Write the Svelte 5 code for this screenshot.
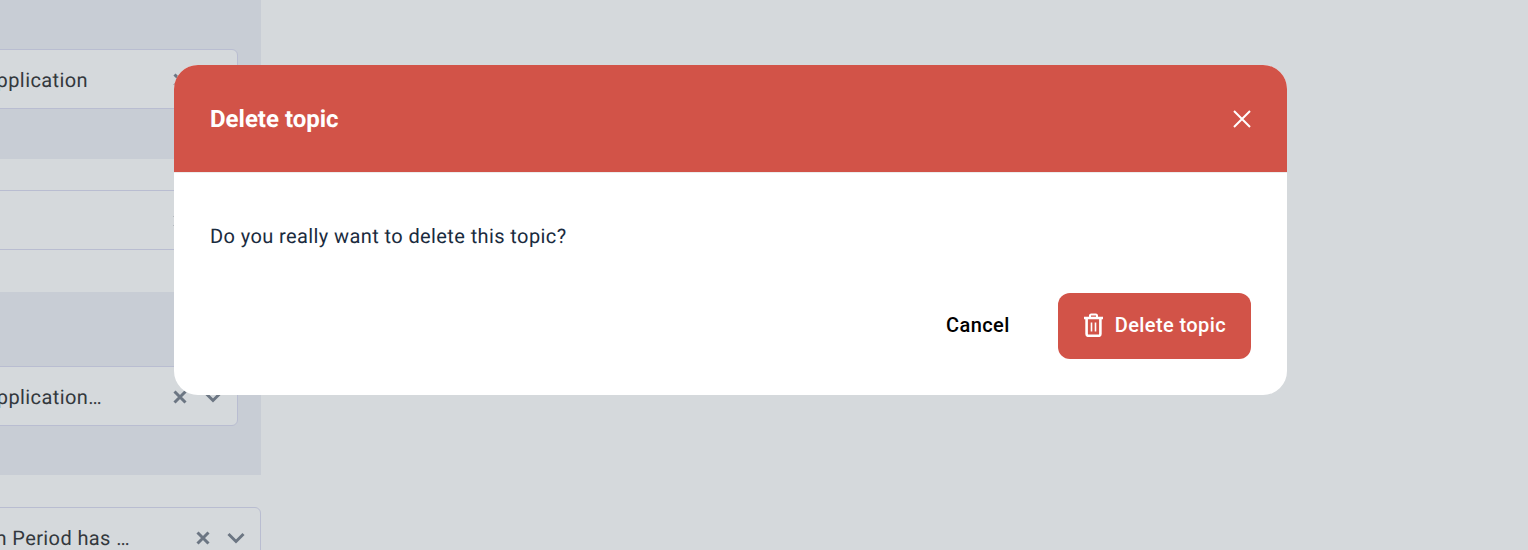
<script>
	// Background filter fields, clipped at the left edge of the window
	const sections = [
		{ shaded: true, kind: 'first', text: 'Application' },
		{ shaded: false, kind: 'second', text: '' },
		{ shaded: true, kind: 'third', text: 'Application…' },
		{ shaded: false, kind: 'fourth', text: 'Application Period has …' }
	];
</script>

<div class="page">
	<div class="column">
		{#each sections as section}
			<section class="section {section.kind}" class:shaded={section.shaded}>
				<div class="field">
					<span class="value">{section.text}</span>
					<svg class="clear" viewBox="0 0 14 14" width="14" height="14" aria-hidden="true">
						<path d="M1.5 1.5l11 11M12.5 1.5l-11 11" />
					</svg>
					<svg class="chevron" viewBox="0 0 18 12" width="18" height="12" aria-hidden="true">
						<path d="M1.5 2l7.5 7.5L16.5 2" />
					</svg>
				</div>
			</section>
		{/each}
	</div>

	<div class="modal" role="dialog" aria-labelledby="modal-title">
		<header class="modal-header">
			<h2 id="modal-title">Delete topic</h2>
			<button class="close" aria-label="Close">
				<svg viewBox="0 0 20 20" width="20" height="20" aria-hidden="true">
					<path d="M2 2l16 16M18 2L2 18" />
				</svg>
			</button>
		</header>
		<div class="modal-body">
			<p>Do you really want to delete this topic?</p>
			<div class="actions">
				<button class="cancel">Cancel</button>
				<button class="confirm">
					<svg viewBox="0 0 21 24" width="21" height="24" aria-hidden="true">
						<path d="M7 4V2.6a1.2 1.2 0 0 1 1.2-1.2h4.6A1.2 1.2 0 0 1 14 2.6V4" stroke-width="2" />
						<path d="M1 5h19" stroke-width="2.4" />
						<path d="M3.6 5v16a1.8 1.8 0 0 0 1.8 1.8h10.2a1.8 1.8 0 0 0 1.8-1.8V5" stroke-width="2.6" />
						<path d="M8.5 9.5v9M12.5 9.5v9" stroke-width="1.6" />
					</svg>
					Delete topic
				</button>
			</div>
		</div>
	</div>
</div>

<style>
	:global(body) {
		background: #d5d9dc;
		font-family: Roboto, 'Liberation Sans', sans-serif;
		text-rendering: geometricPrecision;
	}

	.page {
		height: 550px;
		overflow: hidden;
		background: #d5d9dc;
	}

	.column {
		width: 261px;
	}

	.section {
		box-sizing: border-box;
		padding-right: 23px;
	}

	.shaded {
		background: #c8cdd5;
	}

	.first {
		height: 159px;
		padding-top: 49px;
	}

	.second {
		height: 133px;
		padding-top: 31px;
	}

	.third {
		height: 183px;
		padding-top: 74px;
	}

	.fourth {
		height: 75px;
		padding-top: 32px;
		padding-right: 0;
	}

	.field {
		box-sizing: border-box;
		display: flex;
		align-items: center;
		height: 60px;
		margin-left: -120px;
		padding: 1px 15px 0 0;
		border: 1px solid #b9bdd1;
		border-radius: 6px;
		background: #d5d9dc;
	}

	.value {
		flex: 1;
		font-size: 20px;
		letter-spacing: 0.4px;
		color: #33383d;
		white-space: nowrap;
		text-align: right;
	}

	.first .value {
		padding-right: 85px;
	}

	.third .value {
		padding-right: 71px;
	}

	.fourth .value {
		padding-right: 66px;
	}

	.clear {
		margin-right: 17px;
		flex: none;
	}

	.clear path,
	.chevron path {
		fill: none;
		stroke: #6c7683;
		stroke-width: 3;
	}

	.chevron {
		flex: none;
	}

	.modal {
		position: absolute;
		left: 174px;
		top: 65px;
		width: 1113px;
		height: 330px;
		border-radius: 24px;
		background: #fff;
		overflow: hidden;
	}

	.modal-header {
		box-sizing: border-box;
		display: flex;
		align-items: center;
		justify-content: space-between;
		height: 108px;
		padding: 0 35px 0 36px;
		background: #d25348;
		border-bottom: 1px solid #eceded;
	}

	h2 {
		margin: 0;
		font-size: 24px;
		font-weight: 700;
		color: #fff;
	}

	.close {
		display: flex;
		padding: 0;
		border: 0;
		background: none;
	}

	.close path {
		fill: none;
		stroke: #fff;
		stroke-width: 2;
	}

	.modal-body {
		padding: 51px 36px 36px;
	}

	p {
		margin: 0;
		font-size: 20px;
		letter-spacing: 0.4px;
		line-height: 24px;
		color: #1a2b3e;
	}

	.actions {
		display: flex;
		justify-content: flex-end;
		align-items: center;
		gap: 48px;
		margin-top: 45px;
	}

	button {
		font-family: inherit;
	}

	.cancel {
		padding: 0 0 2px;
		border: 0;
		background: none;
		font-size: 20px;
		font-weight: 500;
		letter-spacing: 0.4px;
		color: #000;
	}

	.confirm {
		display: flex;
		align-items: center;
		gap: 11px;
		height: 66px;
		padding: 0 25px 2px 25px;
		border: 0;
		border-radius: 12px;
		background: #d25348;
		font-size: 20px;
		font-weight: 500;
		letter-spacing: 0.4px;
		color: #fff;
	}

	.confirm path {
		fill: none;
		stroke: #fff;
	}
</style>
